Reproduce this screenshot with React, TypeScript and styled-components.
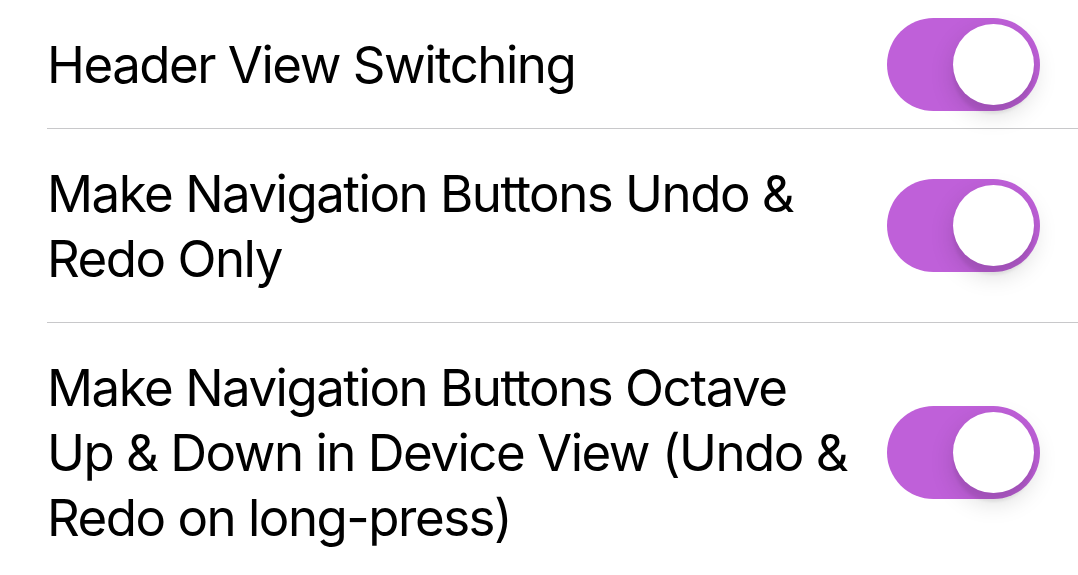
import React, { useState } from 'react'
import styled, { createGlobalStyle } from 'styled-components'

const GlobalStyle = createGlobalStyle`
	html, body {
		margin: 0;
		padding: 0;
		background: #ffffff;
	}
	body {
		font-family: Inter, "Noto Sans", "Liberation Sans", sans-serif;
		-webkit-font-smoothing: antialiased;
	}
`

const List = styled.div`
	display: flex;
	flex-direction: column;
	padding-left: 47px;
	background: #ffffff;
`

const Row = styled.div`
	display: flex;
	align-items: center;
	justify-content: space-between;
	gap: 20px;
	padding-right: 38px;
	border-bottom: 1px solid #c8c8ca;

	&:last-child {
		border-bottom: none;
	}
`

const Label = styled.div`
	flex: 1;
	padding: 31.5px 0;
	font-size: 51px;
	line-height: 65px;
	letter-spacing: -1.5px;
	color: #000000;
	white-space: pre;
`

const Track = styled.button<{ $on: boolean }>`
	position: relative;
	flex-shrink: 0;
	width: 153px;
	height: 93px;
	padding: 0;
	border: none;
	border-radius: 47px;
	background: ${(p) => (p.$on ? '#bf60d9' : '#e9e9eb')};
	cursor: pointer;
	transition: background 0.2s;
`

const Knob = styled.span<{ $on: boolean }>`
	position: absolute;
	top: 6px;
	left: ${(p) => (p.$on ? '66px' : '6px')};
	width: 81px;
	height: 81px;
	border-radius: 50%;
	background: #ffffff;
	box-shadow: 0 9px 24px rgba(0, 0, 0, 0.15), 0 9px 3px rgba(0, 0, 0, 0.06);
	transition: left 0.2s;
`

function Toggle({ initial }: { initial: boolean }) {
	const [on, setOn] = useState(initial)
	return (
		<Track $on={on} onClick={() => setOn(!on)} aria-pressed={on}>
			<Knob $on={on} />
		</Track>
	)
}

const settings = [
	'Header View Switching',
	'Make Navigation Buttons Undo &\nRedo Only',
	'Make Navigation Buttons Octave\nUp & Down in Device View (Undo &\nRedo on long-press)',
]

export default function App() {
	return (
		<>
			<GlobalStyle />
			<List>
				{settings.map((label) => (
					<Row key={label}>
						<Label>{label}</Label>
						<Toggle initial={true} />
					</Row>
				))}
			</List>
		</>
	)
}
